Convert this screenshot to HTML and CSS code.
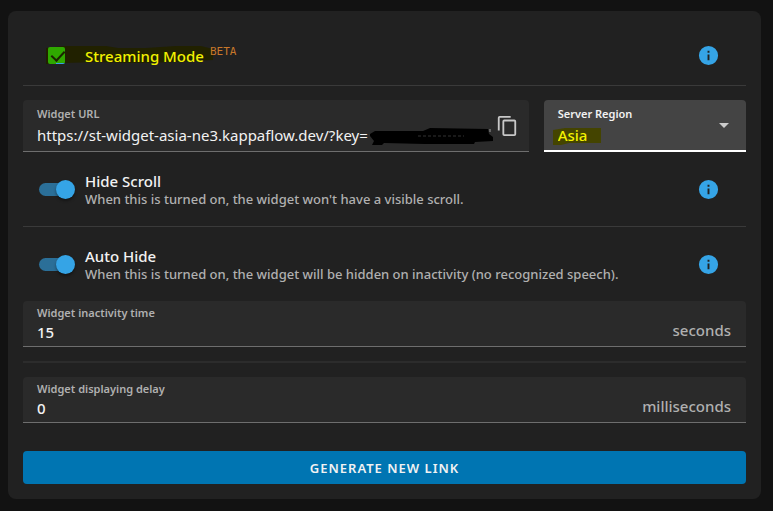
FILE: index.html
```html
<!DOCTYPE html>
<html lang="en">
<head>
    <meta charset="UTF-8">
    <meta name="viewport" content="width=device-width, initial-scale=1.0">
    <title>Widget Settings</title>
    <link rel="stylesheet" href="styles.css">
</head>
<body>
    <svg class="defs" width="0" height="0" aria-hidden="true">
        <symbol id="info" viewBox="0 0 24 24">
            <path fill="currentColor" d="M12 2a10 10 0 1 0 0 20 10 10 0 0 0 0-20zm1 15h-2v-6h2zm0-8h-2V7h2z"/>
        </symbol>
    </svg>

    <form class="card">
        <!-- Streaming mode -->
        <div class="row">
            <svg class="marker" viewBox="0 0 168 18" preserveAspectRatio="none" aria-hidden="true">
                <path d="M0 2 L18 0 L60 0 L72 2 L100 2 L130 0 L155 0 L167 3 L167 14 L130 16 L90 17 L50 16 L20 17 L0 18z"/>
            </svg>
            <span class="control"><input class="checkbox" type="checkbox" id="streaming" checked></span>
            <div class="text">
                <label class="title marked" for="streaming">Streaming Mode</label><sup class="beta">BETA</sup>
            </div>
            <button class="info" type="button" aria-label="About streaming mode"><svg><use href="#info"/></svg></button>
        </div>

        <!-- Widget link -->
        <div class="link">
            <div class="field url">
                <div class="body">
                    <label for="url">Widget URL</label>
                    <input type="text" id="url" value="https://st-widget-asia-ne3.kappaflow.dev/?key=" readonly>
                </div>
                <svg class="scribble" viewBox="0 0 124 18" aria-hidden="true">
                    <path d="M0 6 L5 3 L53 3 L60 0 L118 1 L119 6 L123 9 L123 13 L105 14 L104 16 L55 16 L14 15 L12 17 L2 17 L4 13 L0 8z"/>
                    <path class="dots" d="M48 8 h46"/>
                    <path class="edge" d="M120 1 v3"/>
                </svg>
                <button class="copy" type="button" aria-label="Copy link">
                    <svg viewBox="0 0 24 24"><path fill="currentColor" d="M20 21H9V7h11m0-2H9a2 2 0 0 0-2 2v14a2 2 0 0 0 2 2h11a2 2 0 0 0 2-2V7a2 2 0 0 0-2-2m-4-4H4a2 2 0 0 0-2 2v14h2V3h12z"/></svg>
                </button>
            </div>
            <div class="field region">
                <svg class="marker" viewBox="0 0 48 18" aria-hidden="true">
                    <path d="M0 2 L12 0 L48 0 L48 15 L16 15 L8 17 L0 17z"/>
                </svg>
                <div class="body">
                    <label for="region">Server Region</label>
                    <select id="region" class="marked">
                        <option>Asia</option>
                    </select>
                </div>
            </div>
        </div>

        <!-- Toggles -->
        <div class="row">
            <span class="control"><input class="switch" type="checkbox" id="hide-scroll" checked></span>
            <div class="text">
                <label class="title" for="hide-scroll">Hide Scroll</label>
                <p>When this is turned on, the widget won't have a visible scroll.</p>
            </div>
            <button class="info" type="button" aria-label="About hide scroll"><svg><use href="#info"/></svg></button>
        </div>
        <div class="row last">
            <span class="control"><input class="switch" type="checkbox" id="auto-hide" checked></span>
            <div class="text">
                <label class="title" for="auto-hide">Auto Hide</label>
                <p>When this is turned on, the widget will be hidden on inactivity (no recognized speech).</p>
            </div>
            <button class="info" type="button" aria-label="About auto hide"><svg><use href="#info"/></svg></button>
        </div>

        <!-- Timings -->
        <div class="field">
            <div class="body">
                <label for="inactivity">Widget inactivity time</label>
                <input type="text" inputmode="numeric" id="inactivity" value="15">
            </div>
            <span class="unit">seconds</span>
        </div>
        <hr>
        <div class="field">
            <div class="body">
                <label for="delay">Widget displaying delay</label>
                <input type="text" inputmode="numeric" id="delay" value="0">
            </div>
            <span class="unit">milliseconds</span>
        </div>

        <button class="generate" type="button">GENERATE NEW LINK</button>
    </form>
</body>
</html>
```

FILE: styles.css
```css
* {
    box-sizing: border-box;
}
body {
    margin: 0;
    padding: 11px 12px 12px 8px;
    background-color: #121212;
    color: #f2f2f2;
    font-family: "Noto Sans", sans-serif;
    font-size: 15px;
    font-weight: 500;
}
input, select, button {
    margin: 0;
    padding: 0;
    border: none;
    background: none;
    color: inherit;
    font: inherit;
}
button {
    cursor: pointer;
}
.defs {
    position: absolute;
}
.card {
    padding: 15px;
    border-radius: 8px;
    background-color: #212121;
}

/* rows with a control, a text and an info icon */
.row {
    position: relative;
    display: flex;
    align-items: center;
    height: 75px;
    padding: 0 26px 0 15px;
    border-bottom: 1px solid #3a3a3a;
}
.row:first-child {
    height: 60px;
}
.row.last {
    height: 74px;
    border-bottom: none;
}
.control {
    display: flex;
    width: 47px;
}
.text {
    position: relative;
    flex: 1;
}
.title {
    display: block;
    line-height: 20px;
}
.text p {
    margin: 0;
    color: #b0b0b0;
    font-size: 13px;
    line-height: 17px;
}
.row:first-child .text {
    display: flex;
    gap: 6px;
}
.beta {
    color: #c8782a;
    font-family: "DejaVu Sans Mono", monospace;
    font-size: 11px;
    line-height: 12px;
}
.info {
    display: flex;
    color: #35a4e6;
}
.info svg {
    width: 23px;
    height: 23px;
}

/* yellow highlighter */
.marker {
    position: absolute;
    left: 23px;
    top: 20px;
    width: 168px;
    height: 18px;
    fill: #212100;
}
.marked {
    color: #f2f200;
}

.checkbox {
    appearance: none;
    width: 17px;
    height: 17px;
    margin-left: 10px;
    border-radius: 2px;
    position: relative;
    background: linear-gradient(90deg, #2fa800 50%, #35a4e6 50%) bottom / 100% 1px no-repeat, #2fa800;
}
.checkbox::after {
    content: "";
    position: absolute;
    left: 6px;
    top: 1px;
    width: 6px;
    height: 11px;
    border: solid #1b2400;
    border-width: 0 2px 2px 0;
    transform: rotate(43deg);
}
.switch {
    appearance: none;
    position: relative;
    width: 34px;
    height: 13px;
    margin-left: 1px;
    border-radius: 7px;
    background-color: #2b6f98;
}
.switch::after {
    content: "";
    position: absolute;
    right: -2px;
    top: -3px;
    width: 19px;
    height: 19px;
    border-radius: 50%;
    background-color: #35a4e6;
    box-shadow: 0 2px 3px rgba(0, 0, 0, 0.4);
}

/* filled text fields */
.link {
    display: grid;
    grid-template-columns: 5fr 2fr;
    gap: 15px;
    padding-top: 14px;
}
.field {
    position: relative;
    display: flex;
    align-items: center;
    height: 46px;
    padding: 0 15px 0 14px;
    border-bottom: 1px solid #6e6e6e;
    border-radius: 4px 4px 0 0;
    background-color: #2a2a2a;
}
.link .field {
    height: 52px;
}
.body {
    flex: 1;
    position: relative;
}
.field label {
    display: block;
    color: #b0b0b0;
    font-size: 11px;
    font-weight: 600;
    line-height: 16px;
}
.field input, .field select {
    display: block;
    width: 100%;
    height: 22px;
}
.link .body {
    padding-top: 3px;
}
.link input, .link select {
    height: 26px;
}
.url input {
    font-weight: 400;
}
.unit {
    padding-top: 13px;
    color: #b0b0b0;
}
.scribble {
    position: absolute;
    left: 347px;
    top: 28px;
    width: 124px;
    height: 18px;
}
.scribble .dots {
    stroke: #333;
    stroke-dasharray: 3 2;
}
.scribble .edge {
    stroke: #999;
}
.copy {
    position: relative;
    display: flex;
    margin-right: -4px;
    color: #c8c8c8;
}
.copy svg {
    width: 22px;
    height: 22px;
}
.field.region {
    border-bottom: 2px solid #fff;
    background-color: #444;
}
.region label {
    color: #f2f2f2;
}
.region .marker {
    left: 9px;
    top: 28px;
    width: 48px;
    fill: #444400;
}
.region select {
    appearance: none;
}
.region::after {
    content: "";
    border: 5px solid transparent;
    border-top-color: #ccc;
    border-bottom: none;
    margin-right: 2px;
}

hr {
    margin: 14px 0;
    border: none;
    border-top: 2px solid #2c2c2c;
}
.generate {
    display: block;
    width: 100%;
    height: 33px;
    margin-top: 28px;
    border-radius: 4px;
    background-color: #0075b2;
    font-size: 13px;
    font-weight: 600;
    letter-spacing: 1px;
}
```
